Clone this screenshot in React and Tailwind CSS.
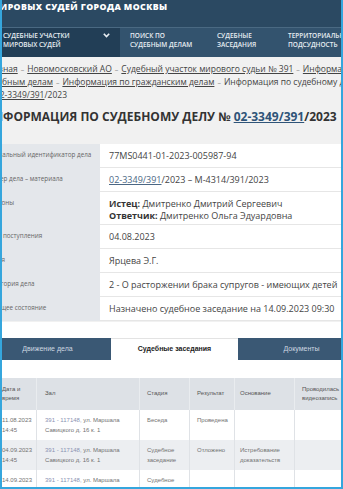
import React from "react";

function Chevron() {
  return (
    <svg width="7" height="5" viewBox="0 0 7 5" className="mt-[2px]">
      <path d="M0.8 0.8 L3.5 3.6 L6.2 0.8" fill="none" stroke="#e8eef3" strokeWidth="1.6" />
    </svg>
  );
}

const Sep = () => <span className="text-[#8a8a8a] text-[7px] mx-[3px]">–</span>;

const info = [
  { label: "Уникальный идентификатор дела", value: "77MS0441-01-2023-005987-94", h: "h-[24px]" },
  {
    label: "Номер дела – материала",
    value: (
      <>
        <span className="underline text-[#4b6784]">02-3349/391</span>/2023 – М-4314/391/2023
      </>
    ),
    h: "h-[24px]",
  },
  {
    label: "Стороны",
    value: (
      <>
        <span className="font-bold text-[#333]">Истец:</span> Дмитренко Дмитрий Сергеевич
        <br />
        <span className="font-bold text-[#333]">Ответчик:</span> Дмитренко Ольга Эдуардовна
      </>
    ),
    h: "h-[33px]",
  },
  { label: "Дата поступления", value: "04.08.2023", h: "h-[24px]" },
  { label: "Судья", value: "Ярцева Э.Г.", h: "h-[24px]" },
  { label: "Категория дела", value: "2 - О расторжении брака супругов - имеющих детей", h: "h-[24px]" },
  { label: "Текущее состояние", value: "Назначено судебное заседание на 14.09.2023 09:30", h: "h-[24px]" },
];

const cols = ["w-[37px] pl-[2px]", "w-[103px] pl-[8px]", "w-[50px] pl-[7px]", "w-[45px] pl-[7px]", "w-[60px] pl-[5px]", "w-[70px] pl-[7px]"];

const Hall = () => (
  <>
    <span className="text-[#8b93b3]">391 - 117148,</span> ул. Маршала
    <br />
    Савицкого д. 16 к. 1
  </>
);

const sessions = [
  [<>11.08.2023<br />14:45</>, <Hall />, "Беседа", "Проведена", "", ""],
  [<>04.09.2023<br />14:45</>, <Hall />, <>Судебное<br />заседание</>, "Отложено", <>Истребование<br />доказательств</>, ""],
  [<>14.09.2023<br />09:30</>, <Hall />, <>Судебное<br />заседание</>, "", "", ""],
];

export default function App() {
  return (
    <div className="relative w-[343px] h-[489px] overflow-hidden bg-white font-['Open_Sans',sans-serif]">
      <div className="ml-[-16px] w-[430px]">
        {/* top bar */}
        <div className="h-[27px] bg-[#2b4962] pl-[7px] pt-[1px]">
          <div className="text-[8.75px] font-extrabold tracking-[0.4px] text-white leading-[12px] whitespace-nowrap">
            МИРОВЫХ СУДЕЙ ГОРОДА МОСКВЫ
          </div>
        </div>
        <div className="h-px bg-[#4a6982]" />
        {/* nav */}
        <nav className="flex h-[29px] bg-[#33536e] text-[6.5px] font-semibold uppercase leading-[9px] text-[#e8eef3] whitespace-nowrap">
          <div className="w-[136px] bg-[#223e56] pl-[19px] pr-[10px] pt-[3px] flex justify-between">
            <span>
              Судебные участки
              <br />
              мировых судей
            </span>
            <Chevron />
          </div>
          <div className="w-[87px] pl-[10px] pt-[3px]">
            Поиск по
            <br />
            судебным делам
          </div>
          <div className="w-[71px] pl-[10px] pt-[3px]">
            Судебные
            <br />
            заседания
          </div>
          <div className="pl-[10px] pt-[3px]">
            Территориальная
            <br />
            подсудность
          </div>
        </nav>

        {/* grey panel */}
        <div className="bg-[#f1f1f1] pb-[1px]">
          <div className="pt-[6px] text-[8.5px] leading-[12px] text-[#444] whitespace-nowrap">
            <div>
              <span className="underline">Главная</span>
              <Sep />
              <span className="underline">Новомосковский АО</span>
              <Sep />
              <span className="underline">Судебный участок мирового судьи № 391</span>
              <Sep />
              <span className="underline">Информация по</span>
            </div>
            <div>
              <span className="underline">судебным делам</span>
              <Sep />
              <span className="underline">Информация по гражданским делам</span>
              <Sep />
              Информация по судебному делу
            </div>
            <div>
              № <span className="underline">02-3349/391</span>/2023
            </div>
          </div>
          <h1 className="mt-[7px] h-[18px] text-[12px] font-bold leading-[18px] text-[#333] whitespace-nowrap">
            ИНФОРМАЦИЯ ПО СУДЕБНОМУ ДЕЛУ № <span className="underline text-[#2f5478]">02-3349/391</span>/2023
          </h1>
          <div className="mt-[18px]">
            {info.map((r, i) => (
              <div key={i} className={`flex ${r.h}`}>
                <div className="w-[116px] shrink-0 bg-[#e4e7eb] pl-[3px] pt-[5px] text-[6.3px] leading-[12px] text-[#666] whitespace-nowrap overflow-hidden">
                  {r.label}
                </div>
                <div className="flex-1 bg-white pl-[9px] pt-[6px] text-[9px] leading-[12px] text-[#444] whitespace-nowrap border-b border-[#e6e6e6]">
                  {r.value}
                </div>
              </div>
            ))}
          </div>
        </div>

        {/* tabs */}
        <div className="mt-[16px] flex font-['Liberation_Sans',sans-serif] text-[7px]">
          <div className="w-[127px] h-[22px] flex items-center justify-center bg-[#3a5874] text-[#cdd7e0]">Движение дела</div>
          <div className="w-[127px] h-[22px] flex items-center justify-center bg-white border-t border-[#e3e3e3] font-bold text-[#222]">
            Судебные заседания
          </div>
          <div className="w-[127px] h-[22px] flex items-center justify-center bg-[#3a5874] text-[#cdd7e0]">Документы</div>
        </div>

        {/* sessions table */}
        <div className="ml-[16px] mt-[18px] font-['Liberation_Sans',sans-serif] text-[6px] leading-[9.5px] whitespace-nowrap">
          <div className="flex h-[32px] bg-[#dde1e6] text-[#555]">
            {["Дата и|время", "Зал", "Стадия", "Результат", "Основание", "Проводилась|видеозапись"].map((t, i) => (
              <div key={i} className={`${cols[i]} shrink-0 flex items-center border-r border-[#e9ecef]`}>
                <span>
                  {t.split("|").map((p, j) => (
                    <React.Fragment key={j}>
                      {j > 0 && <br />}
                      {p}
                    </React.Fragment>
                  ))}
                </span>
              </div>
            ))}
          </div>
          {sessions.map((row, r) => (
            <div key={r} className={`flex h-[30px] text-[#727272] ${r === 1 ? "bg-[#eceef1]" : "bg-white"}`}>
              {row.map((c, i) => (
                <div key={i} className={`${cols[i]} shrink-0 pt-[6px] border-r border-[#dfe2e6]`}>
                  {c}
                </div>
              ))}
            </div>
          ))}
        </div>
      </div>
      <div className="pointer-events-none absolute inset-0 border-l-2 border-r-2 border-b-2 border-[#35a6dd]" />
    </div>
  );
}
